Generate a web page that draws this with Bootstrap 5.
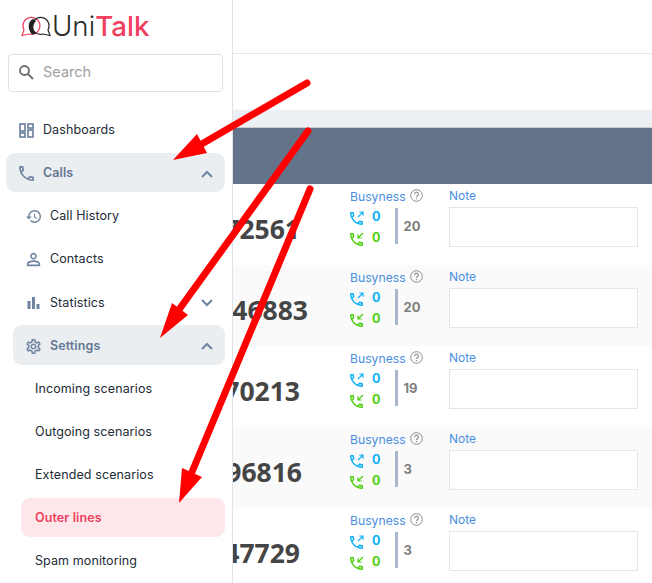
<!DOCTYPE html>
<html lang="en"><head><meta charset="utf-8">
<link href="https://cdn.jsdelivr.net/npm/bootstrap@5.3.0/dist/css/bootstrap.min.css" rel="stylesheet">
<style>
html,body{height:583px;overflow:hidden}
body{font-family:"Inter","Liberation Sans",sans-serif;background:#fff;color:#212b36;position:relative}
.shell{height:583px}
.side{width:233px;flex:none;border-right:1px solid #dfe3e8;height:583px;overflow:hidden}
.brand{height:54px;padding:10px 0 0 21px;gap:1px;font-size:27.7px;line-height:32px;color:#2b2b2b;font-weight:300}
.brand svg{margin-top:5px;flex:none}
.brand b{color:#f0405f;font-weight:500}
.finder{margin:0 9px 0 8px;height:38px;border:1px solid #dfe3e8;border-radius:4px;padding:0 0 2px 9px;gap:9px;color:#a0a0a0;font-size:14.5px}
.menu{padding-top:18px;font-size:12.5px;letter-spacing:.1px}
.entry{height:39.1px;margin:0 7px 4px 6px;border-radius:9px;padding:2px 12px 0 13px;gap:9px}
.entry.sub{margin-left:13px;padding-left:13px}
.entry.leaf{margin-left:21px;padding-left:14px}
.entry.open{background:#ebeef1;color:#637792;font-weight:600}
.entry.hot{background:#fde7ea;color:#f0405f;font-weight:600}
.entry .chev{margin-left:auto}
.entry>svg{flex:none;color:#6f84a0}
.pane{min-width:0;height:583px;overflow:hidden}
.topband{height:54px;border-bottom:1px solid #e4e6e8;flex:none}
.gapband{height:56px;flex:none}
.strip{height:17px;background:#eceff3;flex:none;box-shadow:0 1px 2px rgba(0,0,0,.3)}
.headbar{height:56px;background:#62738a;flex:none;margin-top:1px}
.rowline{height:81px;flex:none}
.rowline.alt{background:#fafafa}
.numcell{width:75px;flex:none;justify-content:flex-end;overflow:hidden;font-family:"Open Sans",sans-serif;font-size:26.5px;font-weight:700;color:#454545;line-height:32px;padding-top:29px}
.numcell span{flex:none}
.trim8{padding-right:8px}.trim6{padding-right:6px}
.busy{width:99px;flex:none;margin-left:42px;padding-top:5px;font-size:12.2px;line-height:16px}
.lbl{color:#4a8fe0;font-weight:400}
.notecell .lbl{font-size:12px}
.help{width:13px;height:13px;margin-left:4px;vertical-align:-1px}
.counts{margin-top:2px;height:37px}
.cline{height:20.5px;gap:8px;font-weight:700;font-size:12.5px;line-height:20px}
.cline svg{flex:none;margin-top:4px}
.blue{color:#12b0f5}.green{color:#4fcf12}
.vbar{width:3px;height:36px;background:#a9b6cc;margin:1px 5px 0 15px}
.total{font-weight:700;font-size:13px;color:#7d7d7d;padding-top:1px}
.notecell{width:189px;flex:none;padding-top:4px;line-height:16px}
.notebox{width:189px;height:40px;border:1px solid #e6e6e6;background:#fff;margin-top:3px}
.arrows{position:absolute;left:0;top:0;pointer-events:none}
</style></head><body>
<svg class="d-none"><defs>
<symbol id="hs" viewBox="3 3 18 18"><path fill="currentColor" d="M6.540 5c.06.890.210 1.760.450 2.590l-1.200 1.200c-.410-1.200-.670-2.470-.760-3.790h1.510m9.860 12.020c.850.240 1.720.390 2.600.450v1.490c-1.320-.090-2.590-.350-3.800-.750l1.200-1.190M7.500 3H4c-.550 0-1 .450-1 1 0 9.390 7.610 17 17 17 .550 0 1-.450 1-1v-3.490c0-.550-.450-1-1-1-1.240 0-2.450-.200-3.570-.570-.100-.040-.210-.050-.310-.050-.260 0-.510.100-.710.290l-2.200 2.200c-2.830-1.450-5.150-3.760-6.590-6.590l2.200-2.200c.280-.280.360-.670.250-1.020C8.700 6.450 8.500 5.250 8.500 4c0-.550-.450-1-1-1z"/></symbol>
<symbol id="qm" viewBox="0 0 13 13"><g fill="none" stroke="#8d8d8d"><circle cx="6.500" cy="6.500" r="5.800"/><path stroke-width="1.200" d="M4.600 5.200a1.900 1.900 0 1 1 2.900 1.500c-.7.400-1 .7-1 1.400M6.500 9v1.200"/></g></symbol>
<symbol id="outc" viewBox="0 0 14 14"><use href="#hs" width="13" height="13" y="1"/><path fill="none" stroke="currentColor" stroke-width="1.200" d="M8 6l5-5M9.300 1H13v3.700"/></symbol>
<symbol id="inc" viewBox="0 0 14 14"><use href="#hs" width="13" height="13" y="1"/><path fill="none" stroke="currentColor" stroke-width="1.200" d="M13 1L8 6M8 2.300V6h3.700"/></symbol>
</defs></svg>
<div class="shell d-flex">
<aside class="side">
 <div class="brand d-flex">
  <svg width="30" height="22" viewBox="0 0 30 22" fill="none"><path d="M3 15A8.500 8.500 0 1 1 8 19L1 20.500z" stroke="#f0405f" stroke-width="1.200"/><path d="M27 15A8.500 8.500 0 1 0 22 19L29 20.500z" stroke="#2b2b2b" stroke-width="1.200"/><path d="M12 4C7 6 6 14 11 19.500L15 19C12 15 11 10 15 6z" fill="#222"/></svg>
  <span>Uni<b>Talk</b></span>
 </div>
 <div class="finder d-flex align-items-center">
  <svg width="16" height="16" viewBox="0 0 16 16" fill="none" stroke="#6b6b6b" stroke-width="1.800"><circle cx="6.500" cy="6.500" r="4.500"/><path d="M10 10l5 5"/></svg>
  <span>Search</span>
 </div>
 <nav class="menu">
  <div class="entry d-flex align-items-center"><svg width="15" height="15" viewBox="0 0 15 15" fill="none" stroke="currentColor" stroke-width="1.700"><rect x="1" y="1" width="5" height="7"/><rect x="9" y="1" width="5" height="4"/><rect x="1" y="10" width="5" height="4"/><rect x="9" y="7" width="5" height="7"/></svg><span>Dashboards</span></div>
  <div class="entry open d-flex align-items-center"><svg width="15" height="15" viewBox="3 3 18 18"><use href="#hs" x="3" y="3" width="18" height="18"/></svg><span>Calls</span><svg class="chev" width="12" height="8" viewBox="0 0 12 8" fill="none" stroke="currentColor" stroke-width="2"><path d="M1 7l5-5 5 5"/></svg></div>
  <div class="entry sub d-flex align-items-center"><svg width="15" height="15" viewBox="1 2 21 20" fill="currentColor"><path d="M13 3c-4.970 0-9 4.030-9 9H1l3.890 3.890.070.140L9 12H6c0-3.870 3.130-7 7-7s7 3.130 7 7-3.130 7-7 7c-1.930 0-3.680-.790-4.940-2.060l-1.420 1.420C8.270 19.990 10.510 21 13 21c4.970 0 9-4.030 9-9s-4.030-9-9-9zm-1 5v5l4.280 2.540.720-1.210-3.500-2.080V8H12z"/></svg><span>Call History</span></div>
  <div class="entry sub d-flex align-items-center"><svg width="15" height="15" viewBox="3 3 18 18" fill="currentColor"><path d="M12 5.900c1.160 0 2.100.940 2.100 2.100s-.940 2.100-2.100 2.100S9.900 9.160 9.900 8s.940-2.100 2.100-2.100m0 9c2.970 0 6.100 1.460 6.100 2.100v1.100H5.900V17c0-.640 3.130-2.100 6.100-2.100M12 4C9.790 4 8 5.790 8 8s1.790 4 4 4 4-1.790 4-4-1.790-4-4-4zm0 9c-2.670 0-8 1.340-8 4v3h16v-3c0-2.660-5.330-4-8-4z"/></svg><span>Contacts</span></div>
  <div class="entry sub d-flex align-items-center"><svg width="15" height="15" viewBox="0 0 15 15" fill="currentColor"><rect x="1.500" y="6" width="3" height="8"/><rect x="6" y="2" width="3" height="12"/><rect x="10.500" y="9" width="3" height="5"/></svg><span>Statistics</span><svg class="chev" width="12" height="8" viewBox="0 0 12 8" fill="none" stroke="currentColor" stroke-width="2"><path d="M1 1l5 5 5-5"/></svg></div>
  <div class="entry sub open d-flex align-items-center"><svg width="15" height="15" viewBox="2 2 20 20" fill="currentColor"><path d="M19.430 12.980c.040-.320.070-.640.070-.980 0-.340-.030-.660-.070-.980l2.110-1.650c.190-.150.240-.420.120-.640l-2-3.460c-.090-.160-.260-.250-.440-.250-.060 0-.120.010-.170.030l-2.490 1c-.520-.400-1.080-.730-1.690-.980l-.380-2.650C14.460 2.180 14.250 2 14 2h-4c-.250 0-.460.180-.490.420l-.380 2.650c-.610.250-1.170.590-1.690.980l-2.490-1c-.060-.020-.120-.030-.180-.030-.170 0-.340.090-.430.250l-2 3.460c-.130.220-.070.490.120.640l2.110 1.650c-.040.320-.070.650-.070.980 0 .330.030.660.070.980l-2.110 1.650c-.190.150-.240.420-.120.640l2 3.460c.090.160.260.250.440.250.060 0 .120-.010.170-.030l2.490-1c.520.400 1.080.730 1.690.980l.380 2.650c.030.240.240.420.490.420h4c.250 0 .460-.180.490-.420l.380-2.650c.610-.250 1.170-.590 1.690-.980l2.490 1c.060.020.120.030.180.030.170 0 .340-.090.430-.250l2-3.460c.120-.220.070-.490-.120-.640l-2.110-1.650zm-1.980-1.710c.040.310.050.520.050.730 0 .210-.020.430-.05.730l-.14 1.130.890.700 1.080.84-.700 1.210-1.270-.510-1.040-.420-.900.680c-.430.320-.840.560-1.250.73l-1.060.43-.160 1.130-.200 1.350h-1.400l-.190-1.350-.160-1.130-1.060-.43c-.43-.180-.83-.41-1.230-.71l-.910-.700-1.060.43-1.270.51-.700-1.210 1.080-.84.890-.700-.140-1.130c-.030-.31-.05-.54-.05-.74s.02-.43.05-.73l.14-1.130-.89-.700-1.080-.84.700-1.210 1.270.51 1.040.42.900-.68c.43-.32.84-.56 1.250-.73l1.060-.43.16-1.130.200-1.350h1.390l.19 1.350.16 1.130 1.060.43c.43.18.83.41 1.230.71l.91.700 1.060-.43 1.270-.51.700 1.210-1.070.85-.89.700.14 1.130zM12 8c-2.210 0-4 1.790-4 4s1.790 4 4 4 4-1.790 4-4-1.790-4-4-4zm0 6c-1.100 0-2-.900-2-2s.900-2 2-2 2 .900 2 2-.900 2-2 2z"/></svg><span>Settings</span><svg class="chev" width="12" height="8" viewBox="0 0 12 8" fill="none" stroke="currentColor" stroke-width="2"><path d="M1 7l5-5 5 5"/></svg></div>
  <div class="entry leaf d-flex align-items-center"><span>Incoming scenarios</span></div>
  <div class="entry leaf d-flex align-items-center"><span>Outgoing scenarios</span></div>
  <div class="entry leaf d-flex align-items-center"><span>Extended scenarios</span></div>
  <div class="entry leaf hot d-flex align-items-center"><span>Outer lines</span></div>
  <div class="entry leaf d-flex align-items-center"><span>Spam monitoring</span></div>
 </nav>
</aside>
<main class="pane flex-grow-1 d-flex flex-column">
 <div class="topband"></div><div class="gapband"></div><div class="strip"></div><div class="headbar"></div>

 <div class="rowline d-flex"><div class="numcell trim8 d-flex"><span>72561</span></div><div class="busy"><div><span class="lbl">Busyness</span><svg class="help"><use href="#qm"/></svg></div><div class="counts d-flex"><div><div class="cline blue d-flex"><svg width="14" height="14"><use href="#outc"/></svg>0</div><div class="cline green d-flex"><svg width="14" height="14"><use href="#inc"/></svg>0</div></div><div class="vbar"></div><div class="total align-self-center">20</div></div></div><div class="notecell"><div class="lbl">Note</div><div class="notebox"></div></div></div>

 <div class="rowline alt d-flex"><div class="numcell d-flex"><span>46883</span></div><div class="busy"><div><span class="lbl">Busyness</span><svg class="help"><use href="#qm"/></svg></div><div class="counts d-flex"><div><div class="cline blue d-flex"><svg width="14" height="14"><use href="#outc"/></svg>0</div><div class="cline green d-flex"><svg width="14" height="14"><use href="#inc"/></svg>0</div></div><div class="vbar"></div><div class="total align-self-center">20</div></div></div><div class="notecell"><div class="lbl">Note</div><div class="notebox"></div></div></div>

 <div class="rowline d-flex"><div class="numcell trim8 d-flex"><span>70213</span></div><div class="busy"><div><span class="lbl">Busyness</span><svg class="help"><use href="#qm"/></svg></div><div class="counts d-flex"><div><div class="cline blue d-flex"><svg width="14" height="14"><use href="#outc"/></svg>0</div><div class="cline green d-flex"><svg width="14" height="14"><use href="#inc"/></svg>0</div></div><div class="vbar"></div><div class="total align-self-center">19</div></div></div><div class="notecell"><div class="lbl">Note</div><div class="notebox"></div></div></div>

 <div class="rowline alt d-flex"><div class="numcell trim6 d-flex"><span>96816</span></div><div class="busy"><div><span class="lbl">Busyness</span><svg class="help"><use href="#qm"/></svg></div><div class="counts d-flex"><div><div class="cline blue d-flex"><svg width="14" height="14"><use href="#outc"/></svg>0</div><div class="cline green d-flex"><svg width="14" height="14"><use href="#inc"/></svg>0</div></div><div class="vbar"></div><div class="total align-self-center">3</div></div></div><div class="notecell"><div class="lbl">Note</div><div class="notebox"></div></div></div>

 <div class="rowline d-flex"><div class="numcell trim8 d-flex"><span>47729</span></div><div class="busy"><div><span class="lbl">Busyness</span><svg class="help"><use href="#qm"/></svg></div><div class="counts d-flex"><div><div class="cline blue d-flex"><svg width="14" height="14"><use href="#outc"/></svg>0</div><div class="cline green d-flex"><svg width="14" height="14"><use href="#inc"/></svg>0</div></div><div class="vbar"></div><div class="total align-self-center">3</div></div></div><div class="notecell"><div class="lbl">Note</div><div class="notebox"></div></div></div>
</main>
</div>
<svg class="arrows" width="652" height="583" viewBox="0 0 652 583"><g stroke="#f00" stroke-width="7" stroke-linecap="round"><path d="M307 83L200 145"/><path d="M308 131L178 311"/><path d="M310 189L192 472"/></g><g fill="#f00"><path d="M173 160L197 134 207 153z"/><path d="M160 338L172 303 188 315z"/><path d="M179 503L182 468 202 477z"/></g></svg>
</body></html>
